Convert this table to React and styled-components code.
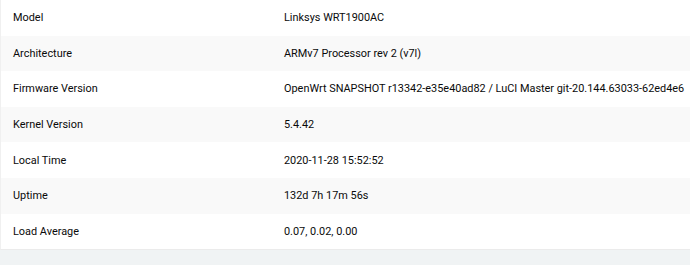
import React from 'react'
import styled, { createGlobalStyle } from 'styled-components'

const Global = createGlobalStyle`
  html, body {
    margin: 0;
    padding: 0;
    background: #f0f3f4;
  }
  body {
    font-family: Roboto, "Liberation Sans", sans-serif;
    color: #0a0a0a;
  }
`

const UI = {
  Page: styled.div`
    width: 690px;
    height: 265px;
    overflow: hidden;
    background: #f0f3f4;
  `,
  Card: styled.div`
    background: #fff;
    border-left: 1px solid #f0f0f0;
    border-bottom: 1px solid #ebebeb;
    margin-bottom: 9px;
  `,
  Row: styled.div`
    display: grid;
    grid-template-columns: 283px 1fr;
    align-items: center;
    height: 35.6px;
    font-size: 10.9px;
    background: ${p => (p.$shade ? '#f9f9f9' : '#fff')};
  `,
  Label: styled.div`
    padding-left: 12px;
  `,
  Value: styled.div`
    white-space: nowrap;
  `,
}

const rows = [
  ['Model', 'Linksys WRT1900AC'],
  ['Architecture', 'ARMv7 Processor rev 2 (v7l)'],
  ['Firmware Version', 'OpenWrt SNAPSHOT r13342-e35e40ad82 / LuCI Master git-20.144.63033-62ed4e6'],
  ['Kernel Version', '5.4.42'],
  ['Local Time', '2020-11-28 15:52:52'],
  ['Uptime', '132d 7h 17m 56s'],
  ['Load Average', '0.07, 0.02, 0.00'],
]

export default function App() {
  return (
    <UI.Page>
      <Global />
      <UI.Card>
        {rows.map(([label, value], i) => (
          <UI.Row key={label} $shade={i % 2 === 1}>
            <UI.Label>{label}</UI.Label>
            <UI.Value>{value}</UI.Value>
          </UI.Row>
        ))}
      </UI.Card>
    </UI.Page>
  )
}
